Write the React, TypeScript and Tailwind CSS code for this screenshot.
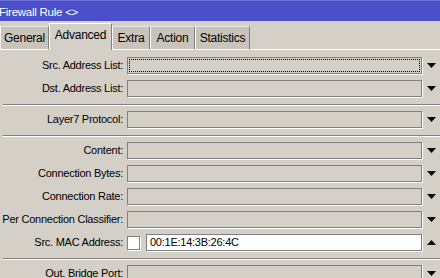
import React from "react";

const Arrow = ({ up = false }: { up?: boolean }) => (
  <div className="w-[18px] h-full flex items-center justify-center">
    <svg width="9" height="5" viewBox="0 0 9 5">
      {up ? <polygon points="0,5 9,5 4.5,0" fill="#000" /> : <polygon points="0,0 9,0 4.5,5" fill="#000" />}
    </svg>
  </div>
);

const Row = ({ label, focus = false }: { label: string; focus?: boolean }) => (
  <div className="flex items-center h-[23px]">
    <div className="w-[124px] text-right pr-[1px] leading-[17px]">{label}</div>
    <div className="ml-[3px] w-[295px] h-[17px] border border-[#808080] shadow-[1px_1px_0_#ffffff] p-px">
      {focus && <div className="w-full h-full border border-dotted border-black" />}
    </div>
    <Arrow />
  </div>
);

const Sep = () => (
  <div className="pt-[4px] pb-[2px] pl-[3px]">
    <div className="h-px bg-[#808080]" />
    <div className="h-px bg-white" />
  </div>
);

const tabs = [
  { name: "General", w: 49 },
  { name: "Advanced", w: 63, active: true },
  { name: "Extra", w: 38 },
  { name: "Action", w: 45 },
  { name: "Statistics", w: 55 },
];

export default function App() {
  return (
    <div className="w-[440px] h-[278px] overflow-hidden bg-[#d4d0c8] text-black text-[11px] tracking-[-0.25px] font-['Liberation_Sans',Arial,sans-serif]">
      <div className="h-[21px] bg-[#4b4fc9] border-t border-[#6a6ed6] text-white text-[11.5px] pt-[3px] leading-[17px] -ml-[1px]">
        Firewall Rule &lt;&gt;
      </div>
      <div className="flex items-end h-[29px]">
        {tabs.map((t) =>
          t.active ? (
            <div
              key={t.name}
              style={{ width: t.w }}
              className="h-[27px] bg-[#d4d0c8] border-t border-l border-white border-r border-r-[#808080] text-center leading-[22px] text-[12px]"
            >
              {t.name}
            </div>
          ) : (
            <div
              key={t.name}
              style={{ width: t.w }}
              className="h-[24px] bg-[#c8c4bc] border-t border-l border-t-[#e8e6e0] border-l-white border-r border-r-[#808080] border-b border-b-white text-center leading-[22px] text-[12px]"
            >
              {t.name}
            </div>
          )
        )}
        <div className="flex-1 border-b border-white" />
      </div>
      <div className="pt-[4px]">
        <Row label="Src. Address List:" focus />
        <Row label="Dst. Address List:" />
        <Sep />
        <Row label="Layer7 Protocol:" />
        <Sep />
        <Row label="Content:" />
        <Row label="Connection Bytes:" />
        <Row label="Connection Rate:" />
        <Row label="Per Connection Classifier:" />
        <div className="flex items-center h-[23px]">
          <div className="w-[124px] text-right pr-[1px] leading-[17px]">Src. MAC Address:</div>
          <div className="ml-[3px] w-[13px] h-[14px] bg-white border border-[#808080] shadow-[1px_1px_0_#ffffff]" />
          <div className="ml-[6px] w-[276px] h-[17px] bg-white border border-[#808080] shadow-[1px_1px_0_#ffffff] pl-[3px] leading-[15px]">
            00:1E:14:3B:26:4C
          </div>
          <Arrow up />
        </div>
        <Sep />
        <Row label="Out. Bridge Port:" />
      </div>
    </div>
  );
}
